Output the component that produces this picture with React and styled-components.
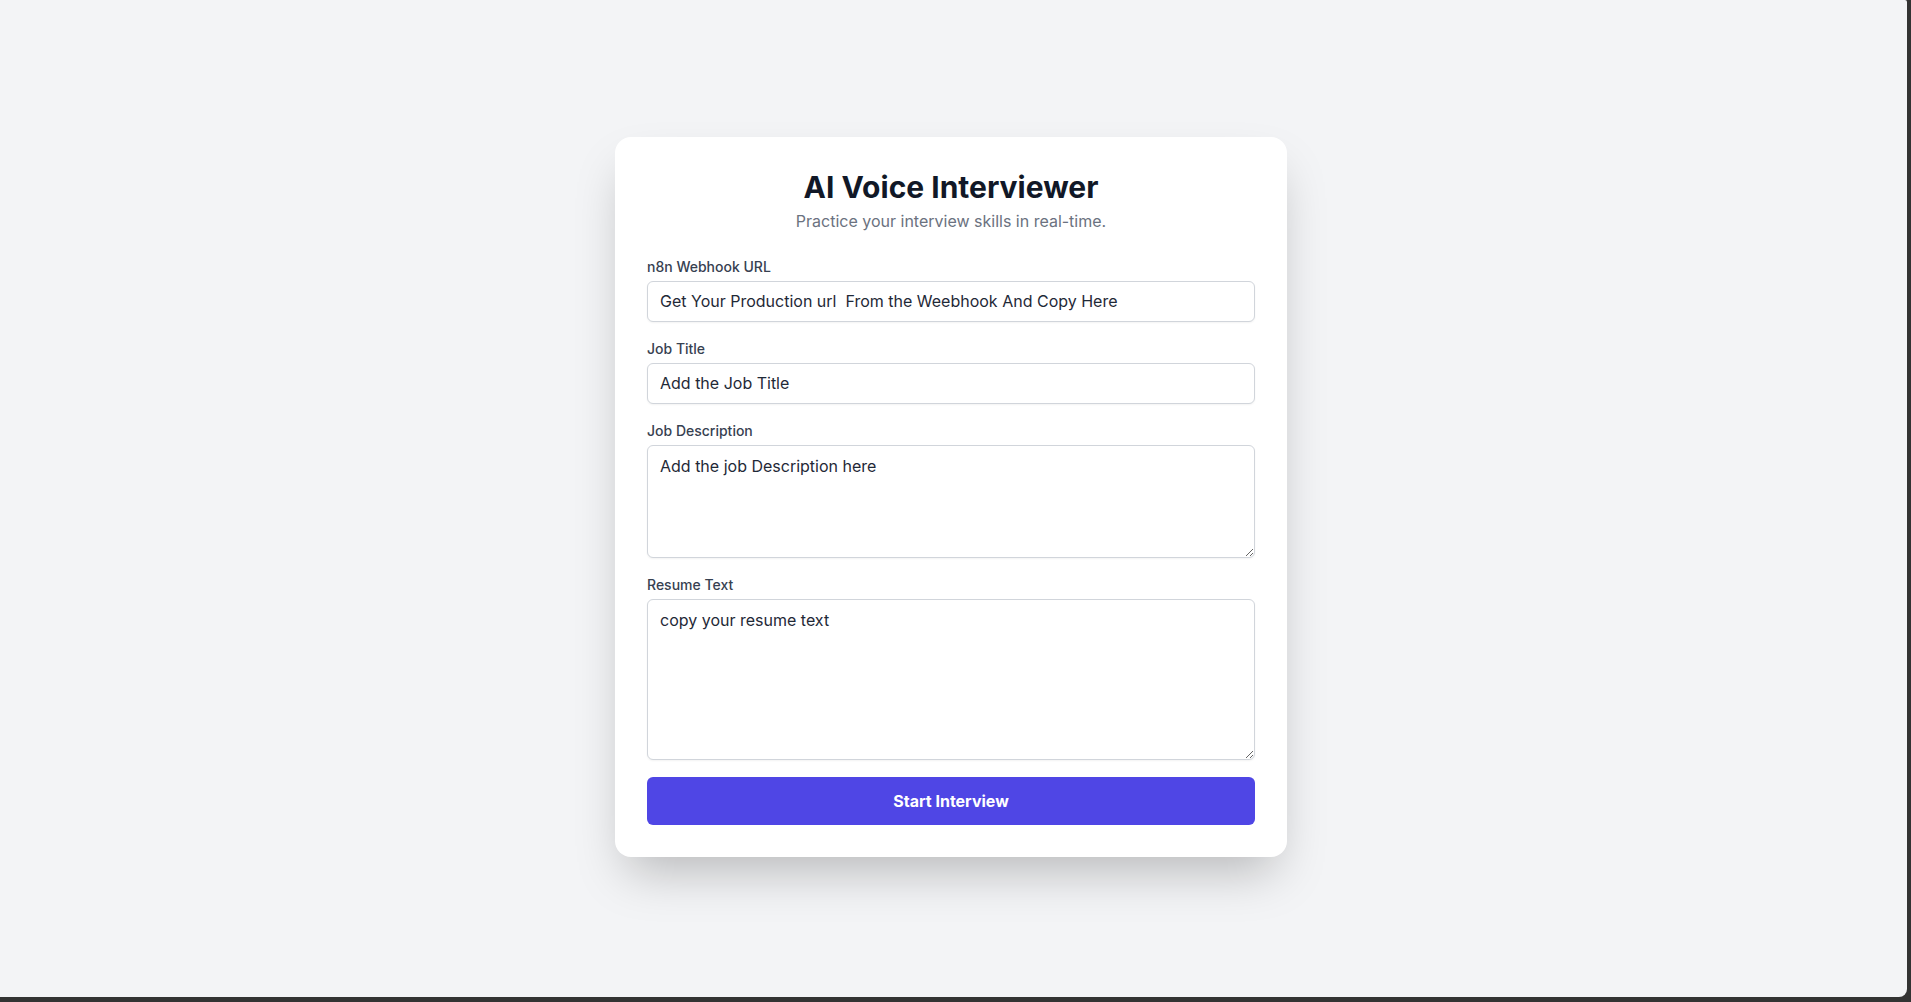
import React from "react";
import styled, { createGlobalStyle } from "styled-components";

const Global = createGlobalStyle`
  html, body {
    margin: 0;
    padding: 0;
    height: 100%;
    background: #333333;
  }
  * { box-sizing: border-box; }
  body {
    font-family: Inter, "Noto Sans", "Liberation Sans", sans-serif;
    -webkit-font-smoothing: antialiased;
  }
`;

const Page = styled.div`
  width: calc(100vw - 4px);
  height: calc(100vh - 5px);
  background: #f3f4f6;
  border-bottom-right-radius: 8px;
  border-top-right-radius: 2px;
  display: flex;
  align-items: center;
  justify-content: center;
  padding: 0 5px 4px 0;
`;

const Card = styled.div`
  width: 672px;
  background: #ffffff;
  border-radius: 16px;
  padding: 32px;
  box-shadow: 0 25px 50px -12px rgba(0, 0, 0, 0.25);
`;

const Title = styled.h1`
  margin: 0;
  text-align: center;
  font-size: 30px;
  line-height: 36px;
  font-weight: 700;
  color: #111827;
`;

const Subtitle = styled.p`
  margin: 4px 0 0;
  text-align: center;
  font-size: 16px;
  line-height: 24px;
  color: #6b7280;
`;

const Form = styled.form`
  margin-top: 24px;
  display: flex;
  flex-direction: column;
  gap: 17px;
`;

const Field = styled.div`
  display: flex;
  flex-direction: column;
`;

const Label = styled.label`
  font-size: 14px;
  line-height: 20px;
  font-weight: 500;
  color: #374151;
  margin-bottom: 4px;
`;

const Input = styled.input`
  width: 100%;
  height: 41px;
  padding: 0 12px;
  font-family: inherit;
  font-size: 16px;
  line-height: 24px;
  color: #1f2937;
  background: #ffffff;
  border: 1px solid #d1d5db;
  border-radius: 6px;
  box-shadow: 0 1px 2px rgba(0, 0, 0, 0.05);
  outline: none;
`;

const TextArea = styled.textarea`
  display: block;
  width: 100%;
  height: ${(p) => p.$h}px;
  padding: 8px 12px;
  font-family: inherit;
  font-size: 16px;
  line-height: 24px;
  color: #1f2937;
  background: #ffffff;
  border: 1px solid #d1d5db;
  border-radius: 6px;
  box-shadow: 0 1px 2px rgba(0, 0, 0, 0.05);
  outline: none;
  resize: vertical;
`;

const Button = styled.button`
  width: 100%;
  height: 48px;
  border: none;
  border-radius: 6px;
  background: #4f46e5;
  color: #ffffff;
  font-family: inherit;
  font-size: 16px;
  font-weight: 700;
  cursor: pointer;
`;

export default function App() {
  return (
    <>
      <Global />
      <Page>
        <Card>
          <Title>AI Voice Interviewer</Title>
          <Subtitle>Practice your interview skills in real-time.</Subtitle>
          <Form onSubmit={(e) => e.preventDefault()}>
            <Field>
              <Label>n8n Webhook URL</Label>
              <Input defaultValue="Get Your Production url  From the Weebhook And Copy Here" />
            </Field>
            <Field>
              <Label>Job Title</Label>
              <Input defaultValue="Add the Job Title" />
            </Field>
            <Field>
              <Label>Job Description</Label>
              <TextArea $h={113} defaultValue="Add the job Description here" />
            </Field>
            <Field>
              <Label>Resume Text</Label>
              <TextArea $h={161} defaultValue="copy your resume text" />
            </Field>
            <Button type="submit">Start Interview</Button>
          </Form>
        </Card>
      </Page>
    </>
  );
}
